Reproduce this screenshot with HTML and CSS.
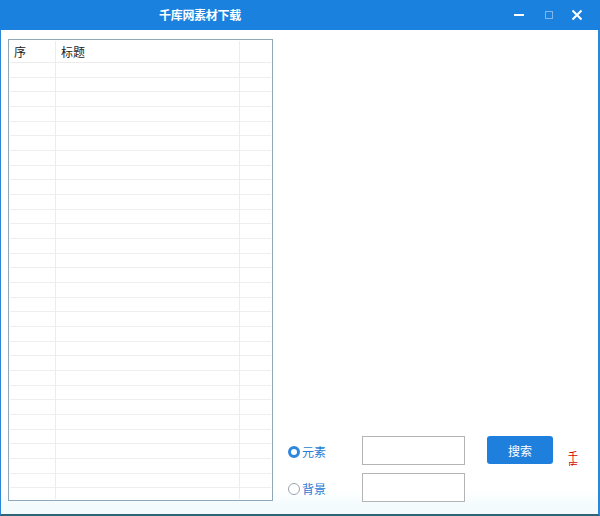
FILE: index.html
```html
<!DOCTYPE html>
<html lang="zh">
<head>
<meta charset="utf-8">
<title>千库网素材下载</title>
<link rel="stylesheet" href="styles.css">
</head>
<body>
<div class="window">
  <div class="titlebar">
    <div class="title">千库网素材下载</div>
    <div class="controls">
      <span class="ctl min"><svg width="12" height="12" viewBox="0 0 12 12"><rect x="1" y="6" width="10" height="2" fill="#fff"/></svg></span>
      <span class="ctl max"><svg width="10" height="10" viewBox="0 0 10 10"><rect x="1.5" y="1.5" width="7" height="7" fill="none" stroke="#7fb6ec" stroke-width="1"/></svg></span>
      <span class="ctl close"><svg width="12" height="12" viewBox="0 0 12 12"><path d="M1.5 1.5 L10.5 10.5 M10.5 1.5 L1.5 10.5" stroke="#fff" stroke-width="2"/></svg></span>
    </div>
  </div>
  <div class="content">
    <div class="list">
      <div class="list-inner">
        <div class="head">
          <div class="c1">序</div>
          <div class="c2">标题</div>
          <div class="c3"></div>
        </div>
        <div class="rows"></div>
      </div>
    </div>
    <div class="panel">
      <div class="form">
        <label class="radio"><span class="dot on"></span>元素</label>
        <div class="input"></div>
        <button class="btn">搜索</button>
        <div class="mark"><span>千库</span></div>
        <label class="radio"><span class="dot"></span>背景</label>
        <div class="input"></div>
      </div>
    </div>
  </div>
</div>
</body>
</html>
```
FILE: styles.css
```css
html, body {
  margin: 0;
  padding: 0;
  background: #ffffff;
}
body {
  font-family: "Noto Sans CJK SC", "Microsoft YaHei", sans-serif;
  font-size: 12px;
  color: #222;
}
.window {
  width: 600px;
  height: 516px;
  box-sizing: border-box;
  border-left: 1px solid #2b88d8;
  border-right: 2px solid #2b88d8;
  border-bottom: 2px solid #2e6478;
  display: flex;
  flex-direction: column;
  background: linear-gradient(#ffffff 0, #ffffff 490px, #f3fbfd 506px);
}
.titlebar {
  height: 30px;
  background: #1a82de;
  display: flex;
  align-items: center;
  margin-left: -1px;
  margin-right: -2px;
}
.title {
  padding-left: 159px;
  color: #fff;
  font-weight: bold;
  font-size: 12px;
  letter-spacing: -0.3px;
  flex: 1;
  line-height: 30px;
}
.controls {
  display: flex;
  align-items: center;
  padding-right: 10px;
}
.ctl {
  display: flex;
  align-items: center;
  justify-content: center;
  width: 30px;
  height: 30px;
}
.ctl.min svg { margin-top: -2px; }
.ctl.close { width: 26px; }
.content {
  flex: 1;
  display: flex;
  padding: 9px 0 0 7px;
}
.list {
  width: 265px;
  height: 462px;
  box-sizing: border-box;
  border: 1px solid #8fa7b6;
  background: #fff;
  padding: 1px;
  overflow: hidden;
}
.list-inner {
  height: 100%;
  overflow: hidden;
  background: #fff;
}
.head {
  display: flex;
  height: 21px;
  border-bottom: 1px solid #ececec;
  line-height: 21px;
}
.c1 {
  width: 46px;
  padding-left: 4px;
  box-sizing: border-box;
  border-right: 1px solid #ececec;
}
.c2 {
  width: 184px;
  padding-left: 5px;
  box-sizing: border-box;
  border-right: 1px solid #ececec;
}
.c3 { flex: 1; }
.rows {
  height: 440px;
  background:
    linear-gradient(90deg, transparent 45px, #ececec 45px, #ececec 46px, transparent 46px, transparent 229px, #ececec 229px, #ececec 230px, transparent 230px),
    repeating-linear-gradient(180deg, transparent 0, transparent 13.67px, #eeeeee 13.67px, #eeeeee 14.67px);
}
.panel {
  flex: 1;
  display: flex;
  flex-direction: column;
  justify-content: flex-end;
  padding-bottom: 12px;
}
.form {
  display: grid;
  grid-template-columns: 74px 103px 66px 1fr;
  grid-template-rows: 29px 29px;
  row-gap: 8px;
  margin-left: 15px;
}
.radio {
  display: flex;
  align-items: center;
  color: #2a7ad3;
  font-size: 12px;
  padding-top: 2px;
}
.dot {
  width: 12px;
  height: 12px;
  box-sizing: border-box;
  border-radius: 50%;
  border: 1px solid #9aa4ae;
  margin-right: 2px;
  background: #fff;
}
.dot.on {
  border: 3px solid #2f86de;
}
.input {
  border: 1px solid #b4b4b4;
  background: #fff;
}
.btn {
  grid-column: 3;
  grid-row: 1;
  margin-left: 22px;
  margin-right: -22px;
  width: 66px;
  height: 28px;
  border: none;
  border-radius: 3px;
  background: #1f7fdd;
  color: #fff;
  font-family: "Noto Sans CJK SC", sans-serif;
  font-size: 12px;
  padding: 0;
}
.mark {
  grid-column: 4;
  grid-row: 1;
  margin-left: 37px;
  padding-top: 15px;
}
.mark span {
  display: block;
  width: 11px;
  color: #d80000;
  font-size: 10px;
  line-height: 10px;
  word-break: break-all;
  height: 15px;
  overflow: hidden;
}
```
